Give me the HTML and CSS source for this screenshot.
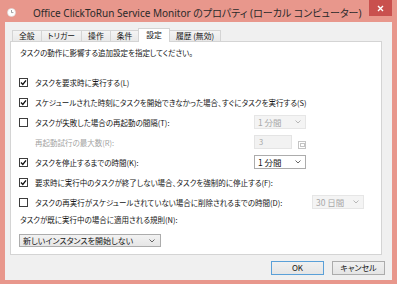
FILE: index.html
```html
<!DOCTYPE html>
<html lang="ja">
<head>
    <meta charset="UTF-8">
    <meta name="viewport" content="width=device-width, initial-scale=1.0">
    <title>Office ClickToRun Service Monitor のプロパティ</title>
    <link rel="stylesheet" href="styles.css">
</head>
<body>
    <div class="window">
        <div class="titlebar">
            <svg class="app-icon" width="9" height="9" viewBox="0 0 9 9">
                <circle cx="4.5" cy="4.5" r="4" fill="#fff" stroke="#d8d8d8" stroke-width="0.6"/>
                <path d="M4.5 2 V4.6 H6.4" fill="none" stroke="#8a8a8a" stroke-width="0.8"/>
            </svg>
            <div class="title">Office ClickToRun Service Monitor のプロパティ (ローカル コンピューター)</div>
            <div class="close">
                <svg width="7" height="7" viewBox="0 0 7 7">
                    <path d="M1 1 L6 6 M6 1 L1 6" stroke="#fff" stroke-width="1.4"/>
                </svg>
            </div>
        </div>

        <div class="client">
            <div class="tabs">
                <div class="tab">全般</div>
                <div class="tab">トリガー</div>
                <div class="tab">操作</div>
                <div class="tab">条件</div>
                <div class="tab active">設定</div>
                <div class="tab">履歴 (無効)</div>
            </div>

            <div class="panel">
                <p class="intro">タスクの動作に影響する追加設定を指定してください。</p>

                <div class="row">
                    <span class="check"><svg viewBox="0 0 9 9"><path d="M2 4.6 L3.8 6.4 L7 2.4" fill="none" stroke="#111" stroke-width="1.4"/></svg></span>
                    <span class="label">タスクを要求時に実行する(L)</span>
                </div>
                <div class="row">
                    <span class="check"><svg viewBox="0 0 9 9"><path d="M2 4.6 L3.8 6.4 L7 2.4" fill="none" stroke="#111" stroke-width="1.4"/></svg></span>
                    <span class="label">スケジュールされた時刻にタスクを開始できなかった場合、すぐにタスクを実行する(S)</span>
                </div>
                <div class="row">
                    <span class="check"></span>
                    <span class="label fixed">タスクが失敗した場合の再起動の間隔(T):</span>
                    <div class="combo disabled">
                        <span>1 分間</span>
                        <svg class="chevron" width="6" height="4" viewBox="0 0 6 4"><path d="M0.5 0.5 L3 3 L5.5 0.5" fill="none" stroke="currentColor" stroke-width="0.9"/></svg>
                    </div>
                </div>
                <div class="row indent">
                    <span class="label fixed muted">再起動試行の最大数(R):</span>
                    <div class="textbox">3</div>
                    <span class="spin"><span></span></span>
                </div>
                <div class="row">
                    <span class="check"><svg viewBox="0 0 9 9"><path d="M2 4.6 L3.8 6.4 L7 2.4" fill="none" stroke="#111" stroke-width="1.4"/></svg></span>
                    <span class="label fixed">タスクを停止するまでの時間(K):</span>
                    <div class="combo">
                        <span>1 分間</span>
                        <svg class="chevron" width="6" height="4" viewBox="0 0 6 4"><path d="M0.5 0.5 L3 3 L5.5 0.5" fill="none" stroke="currentColor" stroke-width="0.9"/></svg>
                    </div>
                </div>
                <div class="row">
                    <span class="check"><svg viewBox="0 0 9 9"><path d="M2 4.6 L3.8 6.4 L7 2.4" fill="none" stroke="#111" stroke-width="1.4"/></svg></span>
                    <span class="label">要求時に実行中のタスクが終了しない場合、タスクを強制的に停止する(F):</span>
                </div>
                <div class="row">
                    <span class="check"></span>
                    <span class="label wide">タスクの再実行がスケジュールされていない場合に削除されるまでの時間(D):</span>
                    <div class="combo disabled">
                        <span>30 日間</span>
                        <svg class="chevron" width="6" height="4" viewBox="0 0 6 4"><path d="M0.5 0.5 L3 3 L5.5 0.5" fill="none" stroke="currentColor" stroke-width="0.9"/></svg>
                    </div>
                </div>

                <p class="rule-label">タスクが既に実行中の場合に適用される規則(N):</p>
                <div class="combo rule">
                    <span>新しいインスタンスを開始しない</span>
                    <svg class="chevron" width="6" height="4" viewBox="0 0 6 4"><path d="M0.5 0.5 L3 3 L5.5 0.5" fill="none" stroke="currentColor" stroke-width="0.9"/></svg>
                </div>
            </div>

            <div class="buttons">
                <button class="btn default">OK</button>
                <button class="btn">キャンセル</button>
            </div>
        </div>
    </div>
</body>
</html>
```

FILE: styles.css
```css
body {
    margin: 0;
    font-family: "Noto Sans CJK JP", sans-serif;
    font-feature-settings: "palt";
    color: #141414;
}
.window {
    width: 397px;
    height: 284px;
    background: #e8978c;
    display: flex;
    flex-direction: column;
}
.titlebar {
    height: 22px;
    display: flex;
    align-items: center;
    padding-left: 7px;
}
.app-icon {
    margin-top: 3px;
}
.title {
    margin-left: 17px;
    margin-top: 2px;
    font-family: "Noto Sans", "Noto Sans CJK JP", sans-serif;
    font-size: 10px;
    color: #2a2a2a;
    white-space: nowrap;
}
.close {
    align-self: flex-start;
    margin-left: auto;
    margin-right: 5px;
    width: 23px;
    height: 16px;
    background: #c9504e;
    display: flex;
    align-items: center;
    justify-content: center;
}
.client {
    height: 258px;
    margin: 0 5px;
    background: #f0f0f0;
    display: flex;
    flex-direction: column;
}
.tabs {
    display: flex;
    align-items: flex-end;
    height: 13px;
    margin-top: 6px;
    padding-left: 7px;
    position: relative;
    z-index: 1;
}
.tab {
    height: 10px;
    padding: 0 6px;
    margin-right: -1px;
    border: 1px solid #d4d4d4;
    border-bottom: none;
    background: linear-gradient(#f4f4f4, #e9e9e9);
    font-size: 7.8px;
    line-height: 10px;
    white-space: nowrap;
}
.tab.active {
    height: 13px;
    margin-bottom: -1px;
    padding: 0 7px;
    background: #fff;
    line-height: 12px;
    position: relative;
}
.panel {
    box-sizing: border-box;
    height: 214px;
    margin: 0 10px 0 5px;
    padding: 4px 0 0 8px;
    background: #fff;
    border: 1px solid #d4d4d4;
    font-size: 7.5px;
}
.intro {
    margin: 0 0 12px 1px;
    line-height: 14px;
}
.row {
    display: flex;
    align-items: center;
    height: 20px;
    white-space: nowrap;
}
.row.indent {
    padding-left: 16px;
}
.check {
    box-sizing: border-box;
    width: 9px;
    height: 9px;
    margin-right: 7px;
    border: 1px solid #3c3c3c;
    background: #fff;
    flex-shrink: 0;
}
.check svg {
    display: block;
    width: 9px;
    height: 9px;
    margin: -1px;
}
.label.fixed {
    width: 219px;
}
.label.wide {
    width: 277px;
}
.muted {
    color: #a3a3a3;
}
.combo {
    box-sizing: border-box;
    width: 52px;
    height: 14px;
    padding: 0 4px 0 3px;
    border: 1px solid #acacac;
    background: #fff;
    display: flex;
    align-items: center;
    justify-content: space-between;
    color: #141414;
    font-size: 8.5px;
}
.combo.disabled {
    border-color: #e6e6e6;
    background: #f4f4f4;
    color: #a8a8a8;
}
.chevron {
    color: #555;
}
.combo.disabled .chevron {
    color: #b0b0b0;
}
.textbox {
    box-sizing: border-box;
    width: 38px;
    height: 14px;
    padding-left: 4px;
    border: 1px solid #e4e4e4;
    background: #f2f2f2;
    color: #a8a8a8;
    line-height: 12px;
}
.spin {
    box-sizing: border-box;
    width: 8px;
    height: 8px;
    margin-left: 6px;
    margin-top: 5px;
    border: 1px solid #c4c4c4;
    display: flex;
    align-items: center;
    justify-content: center;
}
.spin span {
    width: 3px;
    height: 2px;
    border: 1px solid #c4c4c4;
}
.rule-label {
    margin: 0;
    line-height: 16px;
    padding-left: 1px;
}
.combo.rule {
    width: 142px;
    height: 13px;
    margin-top: 6px;
    background: linear-gradient(#f2f2f2, #e6e6e6);
    padding-right: 5px;
    font-size: 8px;
}
.buttons {
    display: flex;
    justify-content: flex-end;
    gap: 8px;
    margin-top: 6px;
    padding-right: 7px;
}
.btn {
    box-sizing: border-box;
    width: 53px;
    height: 14px;
    padding: 0;
    border: 1px solid #acacac;
    background: linear-gradient(#f0f0f0, #e5e5e5);
    font-family: "Noto Sans CJK JP", sans-serif;
    font-feature-settings: "palt";
    font-size: 8px;
    color: #141414;
    line-height: 12px;
}
.btn.default {
    border-color: #5aa0d8;
}
```
